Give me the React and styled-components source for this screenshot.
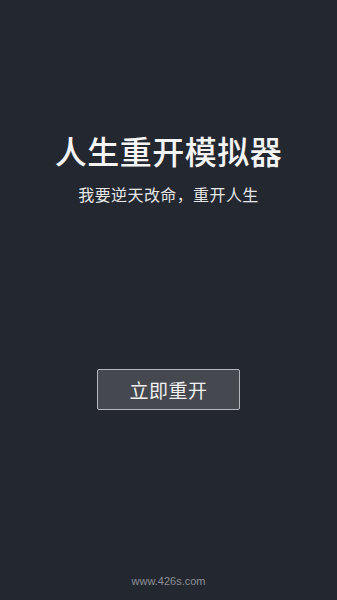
import React from "react";
import styled, { createGlobalStyle } from "styled-components";

const Global = createGlobalStyle`
  html, body { margin: 0; padding: 0; background: #232730; }
  body { font-family: "Noto Sans CJK SC", "Noto Sans", sans-serif; }
`;

const Page = styled.div`
  width: 337px;
  height: 600px;
  background: #232730;
  display: flex;
  flex-direction: column;
  align-items: center;
  box-sizing: border-box;
`;

const Title = styled.h1`
  margin: 128px 0 0;
  font-size: 32px;
  line-height: 44px;
  font-weight: 500;
  color: #f4f4f4;
  letter-spacing: 0.5px;
`;

const Subtitle = styled.p`
  margin: 11px 0 0;
  font-size: 16px;
  line-height: 22px;
  color: #e6e6e6;
  letter-spacing: 0.4px;
`;

const StartButton = styled.button`
  margin-top: 164px;
  width: 143px;
  height: 41px;
  box-sizing: border-box;
  background: #45484f;
  border: 1.5px solid #b5b7bb;
  border-radius: 2px;
  color: #f0f0f0;
  font-family: inherit;
  font-size: 19px;
  padding: 0;
  letter-spacing: 0.5px;
`;

const Spacer = styled.div`
  flex: 1;
`;

const Footer = styled.div`
  margin-bottom: 12px;
  font-family: "Liberation Sans", Arial, sans-serif;
  font-size: 11px;
  line-height: 14px;
  color: #8d9096;
`;

export default function App() {
  return (
    <>
      <Global />
      <Page>
        <Title>人生重开模拟器</Title>
        <Subtitle>我要逆天改命，重开人生</Subtitle>
        <StartButton>立即重开</StartButton>
        <Spacer />
        <Footer>www.426s.com</Footer>
      </Page>
    </>
  );
}
